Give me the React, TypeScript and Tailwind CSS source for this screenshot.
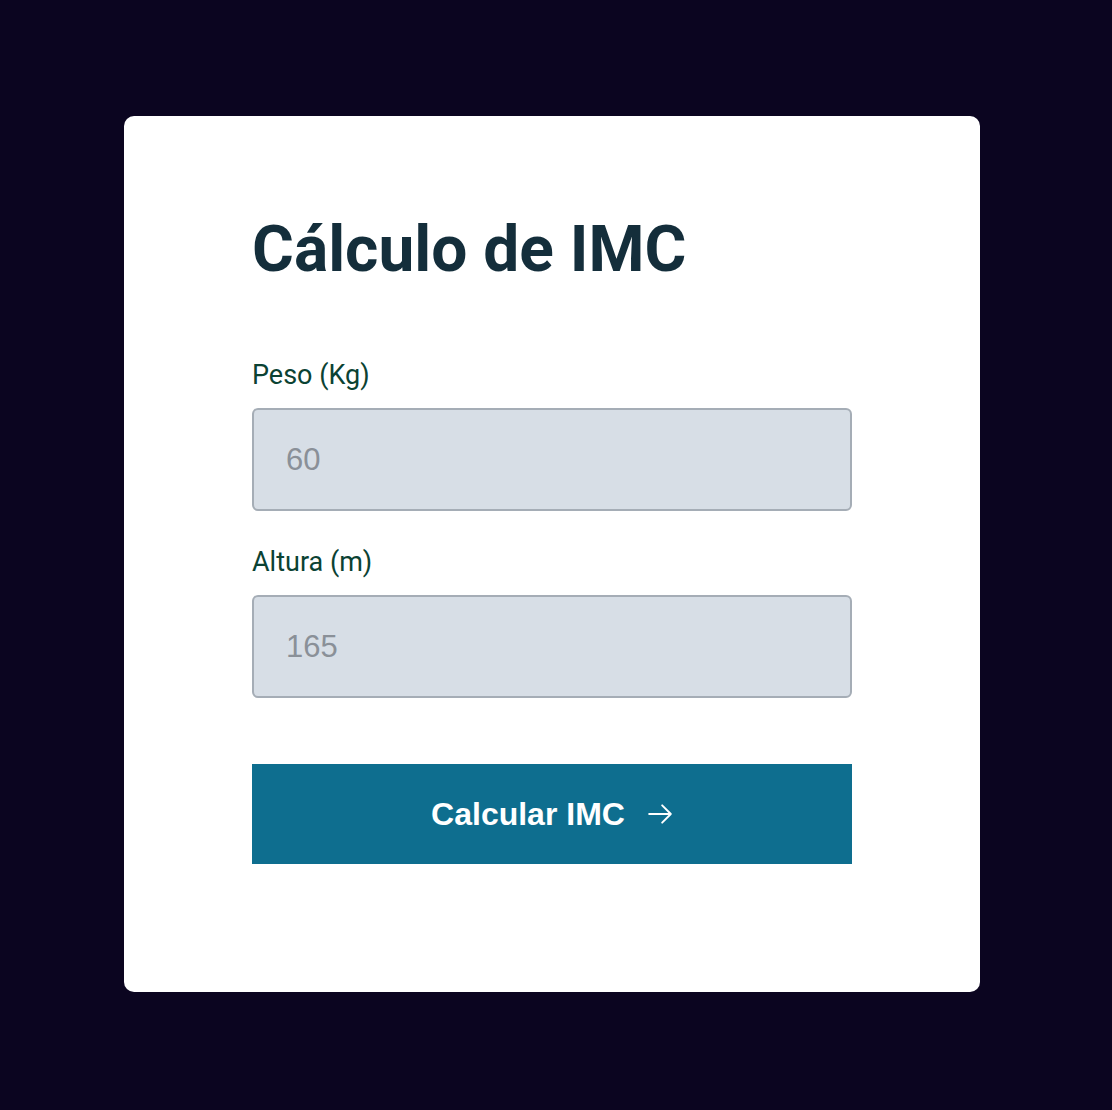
import React from "react";

const Field = ({ label, value }: { label: string; value: string }) => (
  <div className="flex flex-col">
    <label className="font-['Roboto',sans-serif] text-[27px] leading-[32px] text-[#0b4233]">
      {label}
    </label>
    <input
      type="text"
      placeholder={value}
      className="mt-[17px] h-[103px] w-full rounded-[6px] border-2 border-[#a5adb6] bg-[#d7dee6] px-[32px] font-['Liberation_Sans',Arial,sans-serif] text-[31px] text-[#8a9098] placeholder:text-[#8a9098] outline-none"
    />
  </div>
);

export default function App() {
  return (
    <div className="flex min-h-[1110px] w-full bg-[#0b0520] pl-[124px] pt-[116px]">
      <div className="h-[876px] w-[856px] rounded-[10px] bg-white px-[128px] pt-[96px]">
        <h1 className="font-['Roboto',sans-serif] text-[64px] font-bold leading-[76px] text-[#142e3b]">
          Cálculo de IMC
        </h1>
        <div className="mt-[71px] flex flex-col gap-[35px]">
          <Field label="Peso (Kg)" value="60" />
          <Field label="Altura (m)" value="165" />
        </div>
        <button className="mt-[66px] flex h-[100px] w-full items-center justify-center gap-[22px] bg-[#0e6e8f] font-['Liberation_Sans',Arial,sans-serif] text-[32px] font-bold text-white">
          Calcular IMC
          <svg width="26" height="26" viewBox="0 0 24 24" fill="none" stroke="currentColor" strokeWidth="1.8" strokeLinecap="round" strokeLinejoin="round">
            <path d="M2 12h20M14 4l8 8-8 8" />
          </svg>
        </button>
      </div>
    </div>
  );
}
